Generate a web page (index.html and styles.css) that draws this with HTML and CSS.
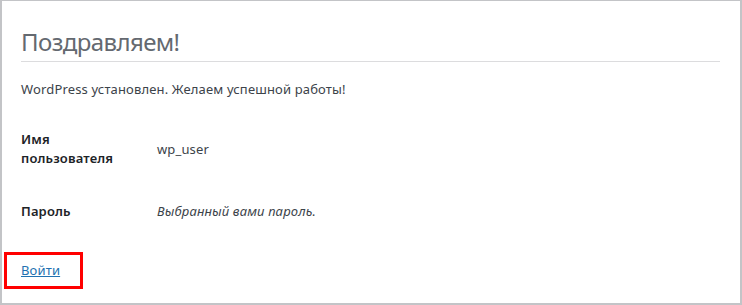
FILE: index.html
```html
<!DOCTYPE html>
<html lang="ru">
<head>
    <meta charset="UTF-8">
    <meta name="viewport" content="width=device-width, initial-scale=1.0">
    <title>Установка WordPress</title>
    <link rel="stylesheet" href="styles.css">
</head>
<body>
    <div class="page">
        <h1 class="title">Поздравляем!</h1>
        <p class="lead">WordPress установлен. Желаем успешной работы!</p>
        <div class="form_table">
            <div class="form_row">
                <div class="form_label">Имя<br>пользователя</div>
                <div class="form_value">wp_user</div>
            </div>
            <div class="form_row">
                <div class="form_label">Пароль</div>
                <div class="form_value note">Выбранный вами пароль.</div>
            </div>
        </div>
        <div class="step">
            <span class="highlight"><a class="login_link" href="#">Войти</a></span>
        </div>
    </div>
</body>
</html>
```

FILE: styles.css
```css
* { box-sizing: border-box; }
body {
    margin: 0;
    background: #fff;
    font-family: "Noto Sans", "Open Sans", sans-serif;
    font-size: 13px;
    letter-spacing: 0.15px;
    color: #3c434a;
}
.page {
    height: 305px;
    border: 1px solid #c3c4c7;
    border-width: 1px 2px 2px 2px;
    padding: 0 20px 0 19px;
    display: flex;
    flex-direction: column;
}
.title {
    margin: 26px 0 0;
    padding-bottom: 5px;
    border-bottom: 1px solid #dcdcde;
    font-size: 24px;
    font-weight: 400;
    letter-spacing: -0.6px;
    color: #646970;
    line-height: 29px;
}
.lead {
    margin: 17px 0 0;
    line-height: 20px;
}
.form_table {
    margin-top: 18px;
    display: flex;
    flex-direction: column;
}
.form_row {
    min-height: 64px;
    display: flex;
    align-items: center;
}
.form_row + .form_row { margin-top: 4px; min-height: 52px; }
.form_label {
    width: 136px;
    font-weight: 600;
    color: #1d2327;
    line-height: 19px;
}
.note { font-style: italic; }
.step {
    margin-top: 15px;
    margin-left: -17px;
}
.highlight {
    display: inline-block;
    border: 3px solid #f00;
    padding: 6px 20px 6px 14px;
}
.login_link {
    color: #2271b1;
    text-decoration: underline;
    line-height: 19px;
}
```
